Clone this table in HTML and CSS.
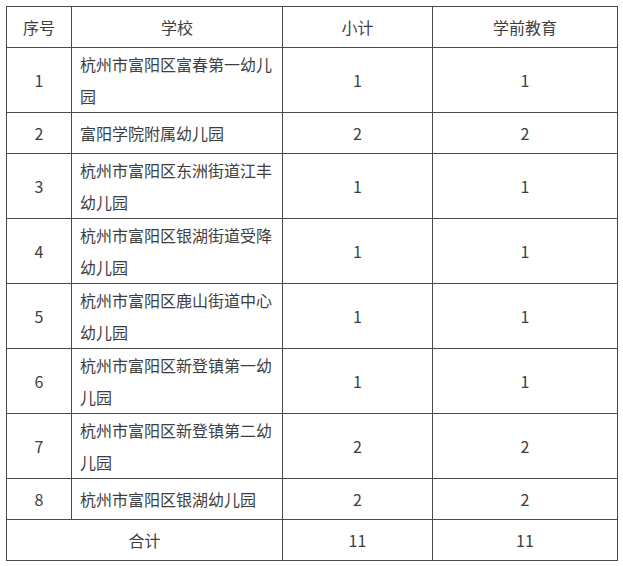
FILE: index.html
```html
<!DOCTYPE html>
<html lang="zh-CN">
<head>
<meta charset="utf-8">
<link rel="stylesheet" href="styles.css">
</head>
<body>
<div class="page">
<table class="grid">
<colgroup>
<col class="c-no"><col class="c-school"><col class="c-sub"><col class="c-pre">
</colgroup>
<thead>
<tr><th>序号</th><th>学校</th><th>小计</th><th>学前教育</th></tr>
</thead>
<tbody>
<tr><td>1</td><td class="name">杭州市富阳区富春第一幼儿园</td><td>1</td><td>1</td></tr>
<tr><td>2</td><td class="name">富阳学院附属幼儿园</td><td>2</td><td>2</td></tr>
<tr><td>3</td><td class="name">杭州市富阳区东洲街道江丰幼儿园</td><td>1</td><td>1</td></tr>
<tr><td>4</td><td class="name">杭州市富阳区银湖街道受降幼儿园</td><td>1</td><td>1</td></tr>
<tr><td>5</td><td class="name">杭州市富阳区鹿山街道中心幼儿园</td><td>1</td><td>1</td></tr>
<tr><td>6</td><td class="name">杭州市富阳区新登镇第一幼儿园</td><td>1</td><td>1</td></tr>
<tr><td>7</td><td class="name">杭州市富阳区新登镇第二幼儿园</td><td>2</td><td>2</td></tr>
<tr><td>8</td><td class="name">杭州市富阳区银湖幼儿园</td><td>2</td><td>2</td></tr>
<tr><td colspan="2">合计</td><td>11</td><td>11</td></tr>
</tbody>
</table>
</div>
</body>
</html>
```
FILE: styles.css
```css
html, body {
  margin: 0;
  padding: 0;
  background: #ffffff;
}
.page {
  padding: 6px;
}
.grid {
  border-collapse: collapse;
  table-layout: fixed;
  width: 612px;
  font-family: "Microsoft YaHei", "Noto Sans CJK SC", "Noto Sans", sans-serif;
  font-size: 16px;
  color: #3e3e3e;
}
.c-no { width: 65px; }
.c-school { width: 211px; }
.c-sub { width: 150px; }
.c-pre { width: 185px; }
.grid th,
.grid td {
  border: 1px solid #4a4a4a;
  height: 40px;
  padding: 0 8px;
  line-height: 32px;
  text-align: center;
  vertical-align: middle;
  font-weight: normal;
  box-sizing: content-box;
}
.grid td.name {
  text-align: left;
  padding: 0 6px 0 8px;
}
```
